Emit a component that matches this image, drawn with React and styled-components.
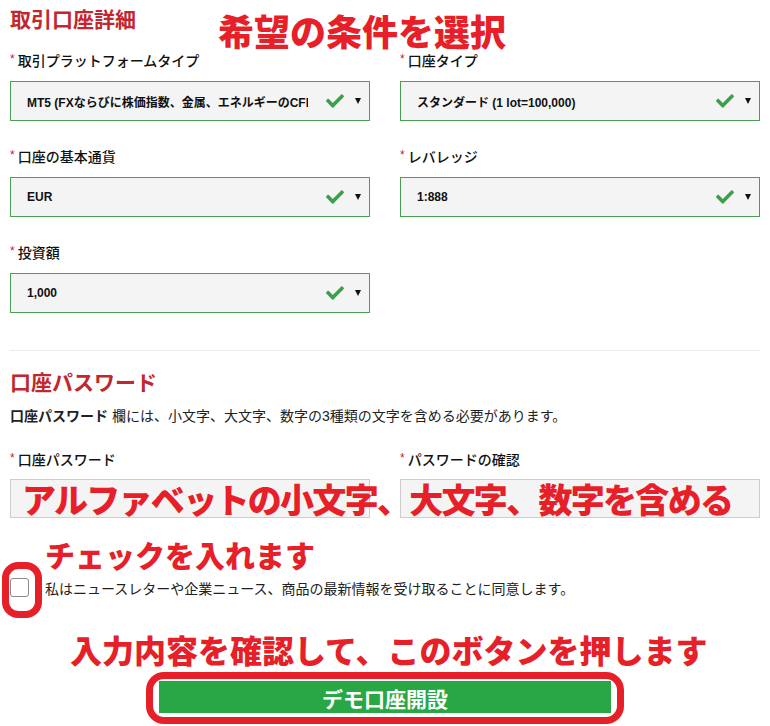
import React from "react";
import styled, { createGlobalStyle } from "styled-components";
import { FaCheck } from "react-icons/fa";

const GlobalStyle = createGlobalStyle`
  body {
    margin: 0;
    background: #fff;
    font-family: "Liberation Sans", "Noto Sans CJK JP", sans-serif;
    color: #1a1a1a;
  }
  * {
    box-sizing: border-box;
  }
`;

const Page = styled.div`
  position: relative;
  width: 770px;
  height: 726px;
  padding: 0 10px;
  overflow: hidden;
`;

const SectionTitle = styled.h2`
  margin: ${(props) => props.margin || "0"};
  padding-top: ${(props) => props.pad || "0"};
  font-size: 21px;
  line-height: 24px;
  font-weight: 700;
  color: #c1272d;
`;

const FieldGrid = styled.div`
  display: grid;
  grid-template-columns: 360px 360px;
  column-gap: 30px;
  row-gap: 25px;
  margin-top: ${(props) => props.top || "0"};
`;

const Field = styled.div`
  display: flex;
  flex-direction: column;
`;

const Label = styled.label`
  display: flex;
  align-items: center;
  height: 20px;
  margin-bottom: ${(props) => props.gap || "11px"};
  font-size: 14px;
  font-weight: 500;
  color: #111;
`;

const Star = styled.span`
  color: #c1272d;
  font-size: 12px;
  margin-right: 3px;
  margin-top: -2px;
`;

const SelectBox = styled.div`
  display: flex;
  align-items: center;
  height: 40px;
  padding: 0 8px 0 16px;
  background: #f4f4f4;
  border: 1px solid #4aa052;
`;

const SelectValue = styled.span`
  flex: 1;
  overflow: hidden;
  white-space: nowrap;
  font-size: 12px;
  font-weight: 700;
  color: #111;
  margin-right: 16px;
`;

const CheckMark = styled(FaCheck)`
  color: #3aa149;
  width: 22px;
  height: 18px;
  margin-right: 9px;
`;

const Caret = styled.span`
  width: 0;
  height: 0;
  border-left: 3px solid transparent;
  border-right: 3px solid transparent;
  border-top: 6px solid #111;
`;

const Divider = styled.hr`
  margin: 37px 0 0;
  border: none;
  border-top: 1px solid #ebebeb;
`;

const Note = styled.p`
  margin: 11px 0 0;
  font-size: 14px;
  line-height: 20px;
  color: #222;

  b {
    font-weight: 700;
  }
`;

const TextInput = styled.input`
  height: 39px;
  width: 100%;
  background: #f4f4f4;
  border: 1px solid #cdcdcd;
  outline: none;
`;

const CheckRow = styled.div`
  display: flex;
  align-items: center;
  margin-top: 60px;
  height: 19px;
`;

const Box = styled.span`
  width: 19px;
  height: 19px;
  border: 1px solid #8a8a8a;
  border-radius: 3px;
  background: #fff;
  margin: 0 16px 0 0;
`;

const CheckText = styled.span`
  font-size: 14px;
  color: #222;
`;

const SubmitButton = styled.button`
  display: block;
  width: 452px;
  height: 32px;
  margin: 84px auto 0;
  border: none;
  background: #2aa745;
  color: #fff;
  font-family: "Noto Sans CJK JP", sans-serif;
  font-size: 21px;
  line-height: 32px;
  font-weight: 700;
`;

const Callout = styled.div`
  position: absolute;
  left: ${(props) => props.x}px;
  top: ${(props) => props.y}px;
  font-family: "Noto Sans CJK JP", sans-serif;
  font-size: ${(props) => props.size}px;
  line-height: 1;
  font-weight: 900;
  color: #e61f29;
  white-space: nowrap;
  letter-spacing: ${(props) => props.spacing || "0"};
`;

const Ring = styled.div`
  position: absolute;
  left: ${(props) => props.x}px;
  top: ${(props) => props.y}px;
  width: ${(props) => props.w}px;
  height: ${(props) => props.h}px;
  border: 7px solid #e61f29;
  border-radius: ${(props) => props.r}px;
`;

const selects = [
  { label: "取引プラットフォームタイプ", value: "MT5 (FXならびに株価指数、金属、エネルギーのCFD)" },
  { label: "口座タイプ", value: "スタンダード (1 lot=100,000)" },
  { label: "口座の基本通貨", value: "EUR" },
  { label: "レバレッジ", value: "1:888" },
  { label: "投資額", value: "1,000" },
];

const App = () => {
  return (
    <Page>
      <GlobalStyle />
      <SectionTitle pad="8px">取引口座詳細</SectionTitle>

      <FieldGrid top="18px">
        {selects.map((s) => (
          <Field key={s.label}>
            <Label>
              <Star>*</Star>
              {s.label}
            </Label>
            <SelectBox>
              <SelectValue>{s.value}</SelectValue>
              <CheckMark />
              <Caret />
            </SelectBox>
          </Field>
        ))}
      </FieldGrid>

      <Divider />

      <SectionTitle margin="20px 0 0">口座パスワード</SectionTitle>
      <Note>
        <b>口座パスワード</b> 欄には、小文字、大文字、数字の3種類の文字を含める必要があります。
      </Note>

      <FieldGrid top="23px">
        <Field>
          <Label gap="10px">
            <Star>*</Star>
            口座パスワード
          </Label>
          <TextInput type="password" />
        </Field>
        <Field>
          <Label gap="10px">
            <Star>*</Star>
            パスワードの確認
          </Label>
          <TextInput type="password" />
        </Field>
      </FieldGrid>

      <CheckRow>
        <Box />
        <CheckText>私はニュースレターや企業ニュース、商品の最新情報を受け取ることに同意します。</CheckText>
      </CheckRow>

      <SubmitButton>デモ口座開設</SubmitButton>

      <Callout x={218} y={12} size={36}>希望の条件を選択</Callout>
      <Callout x={22} y={482} size={34} spacing="-1.7px">
        アルファベットの小文字、大文字、数字を含める
      </Callout>
      <Callout x={45} y={539} size={30}>チェックを入れます</Callout>
      <Callout x={70} y={633} size={32}>入力内容を確認して、このボタンを押します</Callout>
      <Ring x={2} y={562} w={40} h={56} r={16} />
      <Ring x={146} y={672} w={478} h={52} r={18} />
    </Page>
  );
};

export default App;
